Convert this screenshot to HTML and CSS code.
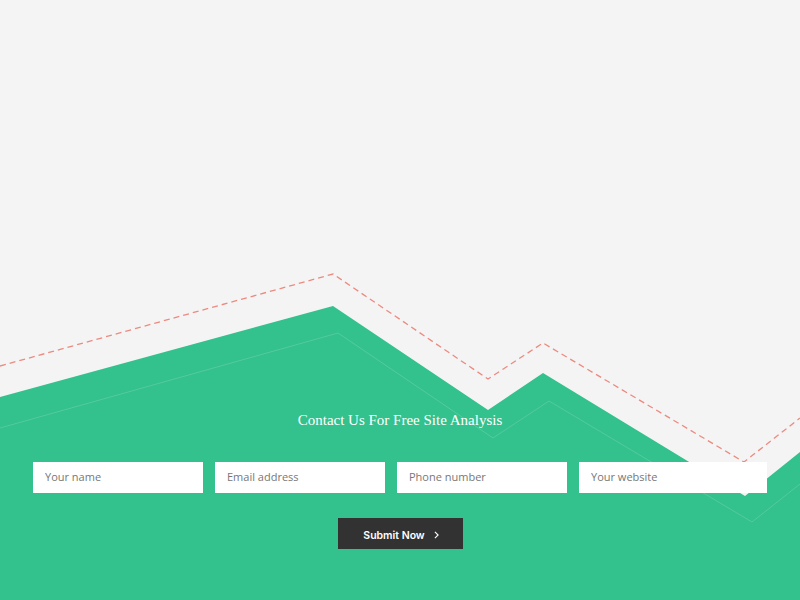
FILE: index.html
```html
<!DOCTYPE html>
<html lang="en">
<head>
<meta charset="utf-8">
<title>Contact Us For Free Site Analysis</title>
<link rel="stylesheet" href="styles.css">
</head>
<body>
<section class="hero">
  <svg class="hero-bg" viewBox="0 0 800 600" width="800" height="600" aria-hidden="true">
    <polygon class="hill" points="0,397 333,306 488,410 543,373 745,496 800,452 800,600 0,600"/>
    <polyline class="dash" points="0,366 333,274 488,379 543,343 744,462 800,418"/>
    <polyline class="inner" points="0,428 338,333 493,438 549,401 752,522 800,484"/>
  </svg>
  <div class="content">
    <h2 class="title">Contact Us For Free Site Analysis</h2>
    <form class="form">
      <div class="fields">
        <input class="field" type="text" placeholder="Your name">
        <input class="field" type="email" placeholder="Email address">
        <input class="field" type="tel" placeholder="Phone number">
        <input class="field field-wide" type="url" placeholder="Your website">
      </div>
      <button class="submit" type="button">Submit Now
        <svg class="chev" viewBox="0 0 6 10" width="5" height="8"><path d="M1 1l4 4-4 4" fill="none" stroke="#fff" stroke-width="1.4"/></svg>
      </button>
    </form>
  </div>
</section>
</body>
</html>
```

FILE: styles.css
```css
* { box-sizing: border-box; }
html, body { margin: 0; padding: 0; }
body { background: #f4f4f4; }

.hero {
  position: relative;
  width: 800px;
  height: 600px;
  overflow: hidden;
  background: #f4f4f4;
}
.hero-bg {
  position: absolute;
  left: 0;
  top: 0;
  display: block;
}
.hill { fill: #33c18d; }
.dash {
  fill: none;
  stroke: #ec8a80;
  stroke-width: 1.3;
  stroke-dasharray: 6 4;
}
.inner {
  fill: none;
  stroke: rgba(255, 255, 255, 0.16);
  stroke-width: 1;
}

.content {
  position: relative;
  padding-top: 410px;
  display: flex;
  flex-direction: column;
  align-items: center;
}
.title {
  margin: 0;
  font-family: "Liberation Serif", "Times New Roman", serif;
  font-weight: normal;
  font-size: 15px;
  line-height: 20px;
  color: #ffffff;
}
.form {
  margin-top: 32px;
  display: flex;
  flex-direction: column;
  align-items: center;
}
.fields {
  display: grid;
  grid-template-columns: 170px 170px 170px 188px;
  column-gap: 12px;
}
.field {
  height: 31px;
  border: 0;
  margin: 0;
  padding: 0 12px 2px;
  background: #ffffff;
  font-family: "Open Sans", "Liberation Sans", sans-serif;
  font-size: 11px;
  color: #555;
  outline: none;
}
.field::placeholder { color: #777777; }

.submit {
  margin-top: 25px;
  width: 125px;
  height: 31px;
  border: 0;
  background: #323232;
  color: #ffffff;
  font-family: Inter, "Open Sans", sans-serif;
  font-weight: 600;
  font-size: 10.5px;
  display: flex;
  align-items: center;
  justify-content: center;
  gap: 9px;
  padding: 3px 0 0 2px;
  cursor: pointer;
}
.chev { display: block; }
```
